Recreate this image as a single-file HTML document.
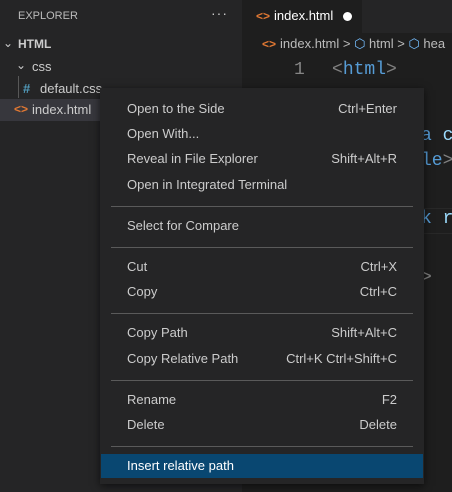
<!DOCTYPE html>
<html><head><meta charset="utf-8"><style>
*{margin:0;padding:0;box-sizing:border-box}
body{width:452px;height:492px;background:#1e1e1e;font-family:"Liberation Sans",sans-serif;position:relative;overflow:hidden;color:#ccc}
.a{position:absolute;white-space:nowrap}
.side{left:0;top:0;width:242px;height:492px;background:#252526}
.mono{font-family:"Liberation Mono",monospace;font-size:18px}
.menu{left:100px;top:88px;width:324px;height:396px;background:#252526;box-shadow:0 2px 8px rgba(0,0,0,.6);font-size:13px;color:#ccc}
.it{position:absolute;left:0;width:324px;height:24px;line-height:24px;padding-left:27px}
.it span{position:absolute;right:27px}
.sep{position:absolute;left:11px;width:302px;height:1px;background:#5a5a5a}
.ang{color:#e37933;font-weight:bold;font-size:12px}
</style></head><body>
<div class="a side"></div>
<div class="a" style="left:18px;top:10px;font-size:11px;color:#bbb">EXPLORER</div>
<div class="a" style="left:211px;top:5px;font-size:14px;color:#ccc;letter-spacing:1px">···</div>
<div class="a" style="left:3px;top:36px;font-size:12px;color:#ccc">&#8964;</div>
<div class="a" style="left:18px;top:37px;font-size:12px;font-weight:bold;color:#ccc">HTML</div>
<div class="a" style="left:16px;top:58px;font-size:12px;color:#ccc">&#8964;</div>
<div class="a" style="left:32px;top:59px;font-size:13px;color:#ccc">css</div>
<div class="a" style="left:18px;top:76px;width:1px;height:22px;background:#585858"></div>
<div class="a" style="left:23px;top:81px;font-size:13px;color:#519aba;font-weight:bold">#</div>
<div class="a" style="left:40px;top:81px;font-size:13px;color:#ccc">default.css</div>
<div class="a" style="left:0;top:99px;width:100px;height:22px;background:#37373d"></div>
<div class="a ang" style="left:14px;top:102px">&lt;&gt;</div>
<div class="a" style="left:32px;top:102px;font-size:13px;color:#ccc">index.html</div>
<div class="a" style="left:362px;top:0;width:90px;height:33px;background:#252526"></div>
<div class="a ang" style="left:256px;top:9px">&lt;&gt;</div>
<div class="a" style="left:274px;top:8px;font-size:13px;color:#fff">index.html</div>
<div class="a" style="left:343px;top:12px;width:9px;height:9px;border-radius:50%;background:#fff"></div>
<div class="a ang" style="left:262px;top:37px">&lt;&gt;</div>
<div class="a" style="left:280px;top:36px;font-size:13px;color:#bbb">index.html &gt; <span style="color:#75beff">&#11041;</span> html &gt; <span style="color:#75beff">&#11041;</span> hea</div>
<div class="a mono" style="left:294px;top:60px;color:#858585">1</div>
<div class="a mono" style="left:332px;top:60px;color:#808080">&lt;<span style="color:#569cd6">html</span>&gt;</div>
<div class="a" style="left:242px;top:208px;width:210px;height:26px;border-top:1px solid #282828;border-bottom:1px solid #282828"></div>
<div class="a mono" style="left:421px;top:126px;color:#569cd6">a <span style="color:#9cdcfe">c</span></div>
<div class="a mono" style="left:421px;top:151px;color:#569cd6">le<span style="color:#808080">&gt;</span></div>
<div class="a mono" style="left:421px;top:209px;color:#569cd6">k <span style="color:#9cdcfe">r</span></div>
<div class="a mono" style="left:421px;top:268px;color:#808080">&gt;</div>
<div class="a menu">
<div class="it" style="top:9px">Open to the Side<span>Ctrl+Enter</span></div>
<div class="it" style="top:34px">Open With...</div>
<div class="it" style="top:59px">Reveal in File Explorer<span>Shift+Alt+R</span></div>
<div class="it" style="top:85px">Open in Integrated Terminal</div>
<div class="sep" style="top:118px"></div>
<div class="it" style="top:126px">Select for Compare</div>
<div class="sep" style="top:159px"></div>
<div class="it" style="top:167px">Cut<span>Ctrl+X</span></div>
<div class="it" style="top:192px">Copy<span>Ctrl+C</span></div>
<div class="sep" style="top:225px"></div>
<div class="it" style="top:233px">Copy Path<span>Shift+Alt+C</span></div>
<div class="it" style="top:259px">Copy Relative Path<span>Ctrl+K Ctrl+Shift+C</span></div>
<div class="sep" style="top:292px"></div>
<div class="it" style="top:300px">Rename<span>F2</span></div>
<div class="it" style="top:325px">Delete<span>Delete</span></div>
<div class="sep" style="top:358px"></div>
<div class="it" style="top:366px;left:1px;width:322px;background:#094771;color:#fff;padding-left:26px">Insert relative path</div>
</div>
</body></html>
